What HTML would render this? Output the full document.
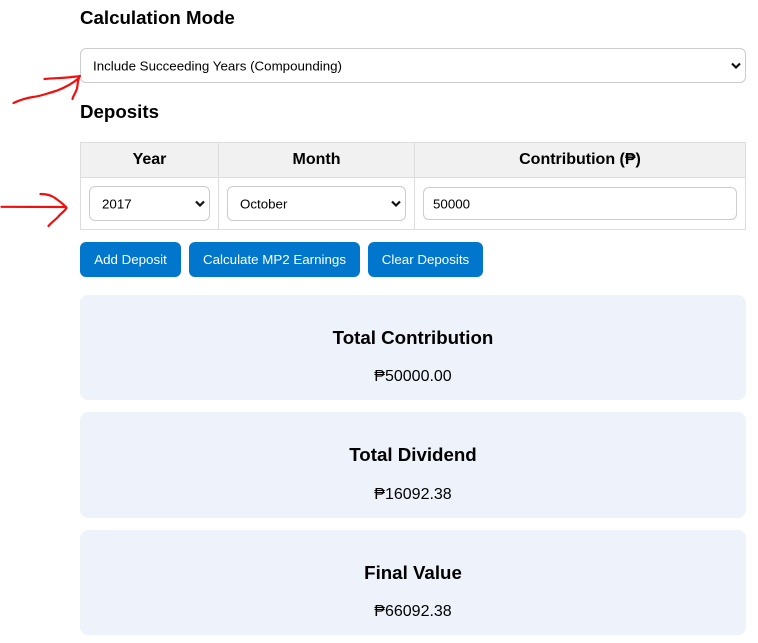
<!DOCTYPE html>
<html lang="en">
<head>
<meta charset="utf-8">
<title>MP2 Calculator</title>
<style>
html,body{margin:0;padding:0;background:#fff;width:758px;height:643px;overflow:hidden}
body{position:relative;font-family:"Liberation Sans",Arial,sans-serif;color:#000}
.a{position:absolute;box-sizing:border-box;white-space:nowrap}
.h{font-size:18.72px;font-weight:bold;line-height:22px;left:80px}
.box{background:#fff;border:1px solid #ccc;border-radius:6px;font-size:13.33px;color:#000}
.box span{position:absolute;top:50%;transform:translateY(-50%)}
.box svg{position:absolute;top:50%;margin-top:-4px;right:3px}
.th{background:#f1f1f1;text-align:center;font-weight:bold;font-size:16px;line-height:33px;top:143px;height:34px}
.line{background:#ddd}
.btn{background:#0077cc;color:#fff;border-radius:6px;font-size:13.33px;text-align:center;top:242px;height:35px;line-height:35px}
.card{left:80px;width:666px;background:#edf2fb;border-radius:8px;text-align:center}
.card b{position:absolute;left:0;right:0;font-size:18.72px;line-height:22px;top:32px}
.card i{position:absolute;left:0;right:0;font-style:normal;font-size:16px;line-height:20px;top:72px}
</style>
</head>
<body>
<div class="a h" style="top:7px">Calculation Mode</div>
<div class="a box" style="left:80px;top:48px;width:666px;height:35px"><span style="left:12px">Include Succeeding Years (Compounding)</span><svg width="12" height="8" viewBox="0 0 12 8"><path d="M2 1.500 6 5.500l4-4" fill="none" stroke="#111" stroke-width="2.200"/></svg></div>
<div class="a h" style="top:101px">Deposits</div>

<div class="a line" style="left:80px;top:142px;width:666px;height:1px"></div>
<div class="a line" style="left:80px;top:177px;width:666px;height:1px"></div>
<div class="a line" style="left:80px;top:229px;width:666px;height:1px"></div>
<div class="a line" style="left:80px;top:142px;width:1px;height:88px"></div>
<div class="a line" style="left:218px;top:142px;width:1px;height:88px"></div>
<div class="a line" style="left:414px;top:142px;width:1px;height:88px"></div>
<div class="a line" style="left:745px;top:142px;width:1px;height:88px"></div>
<div class="a th" style="left:81px;width:137px">Year</div>
<div class="a th" style="left:219px;width:195px">Month</div>
<div class="a th" style="left:415px;width:330px">Contribution (₱)</div>

<div class="a box" style="left:89px;top:186px;width:121px;height:35px"><span style="left:12px">2017</span><svg width="12" height="8" viewBox="0 0 12 8"><path d="M2 1.500 6 5.500l4-4" fill="none" stroke="#111" stroke-width="2.200"/></svg></div>
<div class="a box" style="left:227px;top:186px;width:179px;height:35px"><span style="left:12px">October</span><svg width="12" height="8" viewBox="0 0 12 8"><path d="M2 1.500 6 5.500l4-4" fill="none" stroke="#111" stroke-width="2.200"/></svg></div>
<div class="a box" style="left:423px;top:187px;width:314px;height:33px"><span style="left:9px">50000</span></div>

<div class="a btn" style="left:80px;width:101px">Add Deposit</div>
<div class="a btn" style="left:189px;width:171px">Calculate MP2 Earnings</div>
<div class="a btn" style="left:368px;width:115px">Clear Deposits</div>

<div class="a card" style="top:295px;height:105px"><b>Total Contribution</b><i style="top:72px">₱50000.00</i></div>
<div class="a card" style="top:412px;height:106px"><b>Total Dividend</b><i style="top:73px">₱16092.38</i></div>
<div class="a card" style="top:530px;height:105px"><b>Final Value</b><i style="top:72px">₱66092.38</i></div>

<svg class="a" style="left:0;top:0" width="758" height="643" viewBox="0 0 758 643" fill="none" stroke="#f01010" stroke-width="2.200" stroke-linecap="round" stroke-linejoin="round">
<path d="M13.500 103C20 100 26 98 33 97C42 96 48 93 56 91C64 88 72 84 79 78"/>
<path d="M44.500 79C56 78 68 78 80 76"/>
<path d="M79 78C77 83 78 88 76 91C75 94 73 96 72.500 99"/>
<path d="M1.500 206.800C22 207 44 207 66 207"/>
<path d="M40.500 194C46 194 51 195 55 198C59 201 64 204 66.500 208C64 212 60 214 58 217C55 220 51 223 48.500 226"/>
</svg>
</body>
</html>
